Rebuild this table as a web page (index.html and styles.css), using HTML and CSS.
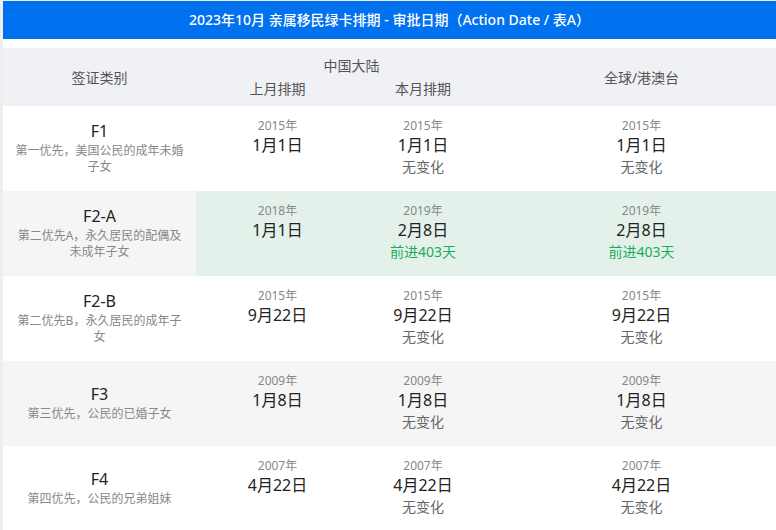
FILE: index.html
```html
<!DOCTYPE html>
<html lang="zh">
<head>
<meta charset="utf-8">
<link rel="stylesheet" href="styles.css">
</head>
<body>
<div class="page">
  <div class="title">2023年10月 亲属移民绿卡排期 - 审批日期（Action Date / 表A）</div>
  <div class="table">
    <div class="thead">
      <div class="th th-type">签证类别</div>
      <div class="th-group">
        <div class="th-group-title">中国大陆</div>
        <div class="th-sub">
          <div class="th-sub-cell">上月排期</div>
          <div class="th-sub-cell c3">本月排期</div>
        </div>
      </div>
      <div class="th th-global">全球/港澳台</div>
    </div>

    <div class="row">
      <div class="cell type"><div class="code">F1</div><div class="desc">第一优先，美国公民的成年未婚<br>子女</div></div>
      <div class="cell data"><div class="year">2015年</div><div class="date">1月1日</div></div>
      <div class="cell data c3"><div class="year">2015年</div><div class="date">1月1日</div><div class="change">无变化</div></div>
      <div class="cell data"><div class="year">2015年</div><div class="date">1月1日</div><div class="change">无变化</div></div>
    </div>

    <div class="row hl">
      <div class="cell type"><div class="code">F2-A</div><div class="desc">第二优先A，永久居民的配偶及<br>未成年子女</div></div>
      <div class="cell data"><div class="year">2018年</div><div class="date">1月1日</div></div>
      <div class="cell data c3"><div class="year">2019年</div><div class="date">2月8日</div><div class="change up">前进403天</div></div>
      <div class="cell data"><div class="year">2019年</div><div class="date">2月8日</div><div class="change up">前进403天</div></div>
    </div>

    <div class="row">
      <div class="cell type"><div class="code">F2-B</div><div class="desc">第二优先B，永久居民的成年子<br>女</div></div>
      <div class="cell data"><div class="year">2015年</div><div class="date">9月22日</div></div>
      <div class="cell data c3"><div class="year">2015年</div><div class="date">9月22日</div><div class="change">无变化</div></div>
      <div class="cell data"><div class="year">2015年</div><div class="date">9月22日</div><div class="change">无变化</div></div>
    </div>

    <div class="row alt">
      <div class="cell type"><div class="code">F3</div><div class="desc">第三优先，公民的已婚子女</div></div>
      <div class="cell data"><div class="year">2009年</div><div class="date">1月8日</div></div>
      <div class="cell data c3"><div class="year">2009年</div><div class="date">1月8日</div><div class="change">无变化</div></div>
      <div class="cell data"><div class="year">2009年</div><div class="date">1月8日</div><div class="change">无变化</div></div>
    </div>

    <div class="row">
      <div class="cell type"><div class="code">F4</div><div class="desc">第四优先，公民的兄弟姐妹</div></div>
      <div class="cell data"><div class="year">2007年</div><div class="date">4月22日</div></div>
      <div class="cell data c3"><div class="year">2007年</div><div class="date">4月22日</div><div class="change">无变化</div></div>
      <div class="cell data"><div class="year">2007年</div><div class="date">4月22日</div><div class="change">无变化</div></div>
    </div>
  </div>
</div>
</body>
</html>
```

FILE: styles.css
```css
html, body {
  margin: 0;
  padding: 0;
}
body {
  background: #eeeeee;
  font-family: "Noto Sans", "Noto Sans CJK SC", sans-serif;
  height: 530px;
  overflow: hidden;
}
.page {
  margin: 1px 0 0 3px;
  background: #ffffff;
  height: 529px;
  overflow: hidden;
}
.title {
  height: 38px;
  background: #0071ef;
  color: #ffffff;
  font-size: 14px;
  font-weight: 500;
  line-height: 38px;
  text-align: center;
}
.table {
  margin-top: 9px;
}
.thead {
  display: grid;
  grid-template-columns: 193px 311px 1fr;
  height: 58px;
  background: #f0f1f5;
  color: #555555;
  font-size: 14px;
}
.th {
  display: flex;
  align-items: center;
  justify-content: center;
}
.th-group {
  display: flex;
  flex-direction: column;
  padding-top: 8px;
}
.th-group-title {
  line-height: 20px;
  text-align: center;
}
.th-sub {
  display: grid;
  grid-template-columns: 163px 1fr;
  margin-top: 2px;
}
.th-sub-cell {
  line-height: 22px;
  text-align: center;
}
.c3 {
  padding-right: 20px;
}
.row {
  display: grid;
  grid-template-columns: 193px 163px 148px 1fr;
  height: 85px;
  background: #ffffff;
}
.row.alt {
  background: #f5f5f5;
}
.row.hl {
  background: #e3f1ea;
}
.row.hl .type {
  background: #f5f5f5;
}
.cell {
  text-align: center;
}
.type {
  display: flex;
  flex-direction: column;
  justify-content: center;
  padding-bottom: 2px;
}
.code {
  font-size: 16px;
  color: #222222;
  line-height: 22px;
}
.desc {
  font-size: 12px;
  color: #888888;
  line-height: 16px;
  margin-top: 1px;
}
.data {
  padding-top: 11px;
}
.year {
  font-size: 12px;
  color: #888888;
  line-height: 18px;
}
.date {
  font-size: 16px;
  color: #222222;
  line-height: 20px;
}
.change {
  font-size: 14px;
  color: #666666;
  line-height: 24px;
}
.change.up {
  color: #19ad5c;
}
```
